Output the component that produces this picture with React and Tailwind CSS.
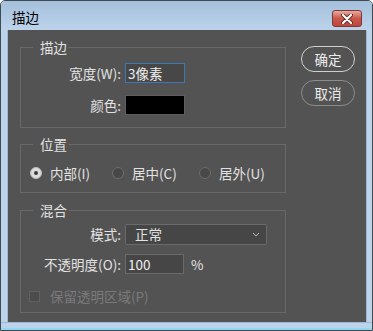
import React from "react";

const font = { fontFamily: '"Noto Sans CJK SC", "Noto Sans", sans-serif' };

const Group = ({ title, children, className }) => (
  <fieldset className={`border border-[#696969] ${className}`}>
    <legend className="ml-[12px] pl-[7px] pr-[2px] h-[18px] leading-[18px] text-[#e2e2e2]">
      {title}
    </legend>
    {children}
  </fieldset>
);

const Radio = ({ checked, label, w }) => (
  <div className={`flex items-center ${w}`}>
    {checked ? (
      <span className="w-[12px] h-[12px] rounded-full bg-[#dcdcdc] border border-[#bdbdbd] flex items-center justify-center">
        <span className="w-[4px] h-[4px] rounded-full bg-[#3a3a3a]" />
      </span>
    ) : (
      <span className="w-[12px] h-[12px] rounded-full bg-[#484848] border border-[#6c6c6c]" />
    )}
    <span className="ml-[8px] text-[#e2e2e2]">{label}</span>
  </div>
);

export default function App() {
  return (
    <div
      className="w-[373px] h-[331px] flex flex-col bg-[#bcd3ea] border border-[#3f4a55] rounded-t-[5px] overflow-hidden text-[13.5px]"
      style={font}
    >
      {/* title bar */}
      <div className="h-[29px] flex items-start justify-between bg-gradient-to-b from-[#a5c0dc] to-[#bcd3ea]">
        <span className="ml-[11px] mt-[8px] leading-[16px] text-black">描边</span>
        <div className="mt-[9px] mr-[10px] w-[30px] h-[17px] rounded-[3px] border border-[#7a3a36] bg-gradient-to-b from-[#e9a99c] via-[#c9584a] to-[#c0463a] flex items-center justify-center">
          <svg width="12" height="10" viewBox="0 0 12 10">
            <path d="M2 1 L10 9 M10 1 L2 9" stroke="#5a2a26" strokeWidth="4" strokeLinecap="round" />
            <path d="M2 1 L10 9 M10 1 L2 9" stroke="#ffffff" strokeWidth="2.2" strokeLinecap="round" />
          </svg>
        </div>
      </div>

      <div className="flex flex-1">
        <div className="w-[7px] border-r border-[#9fb8d2]" />
        {/* content */}
        <div className="w-[358px] h-[292px] bg-[#535353] flex pl-[12px] text-[#e2e2e2]">
          <div className="w-[266px] flex flex-col">
            <Group title="描边" className="mt-[8px] pb-[12px]">
              <div className="flex items-center h-[20px] mt-[7px]">
                <span className="w-[100px] text-right">宽度(W):</span>
                <div className="ml-[4px] w-[60px] h-[20px] bg-[#474747] border border-[#3f77b5] flex items-center px-[2px] text-[#f0f0f0]">
                  3像素
                </div>
              </div>
              <div className="flex items-center h-[20px] mt-[12px]">
                <span className="w-[100px] text-right">颜色:</span>
                <div className="ml-[4px] w-[60px] h-[20px] bg-black border border-[#5e5e5e]" />
              </div>
            </Group>

            <Group title="位置" className="mt-[7px] pb-[10px]">
              <div className="flex items-center h-[18px] mt-[11px] pl-[9px]">
                <Radio checked label="内部(I)" w="w-[82px]" />
                <Radio label="居中(C)" w="w-[87px]" />
                <Radio label="居外(U)" w="w-[80px]" />
              </div>
            </Group>

            <Group title="混合" className="mt-[8px] pb-[8px]">
              <div className="flex items-center h-[20px] mt-[5px]">
                <span className="w-[100px] text-right">模式:</span>
                <div className="ml-[4px] w-[142px] h-[21px] bg-[#464646] border border-[#6a6a6a] rounded-[2px] flex items-center justify-between pl-[9px] pr-[6px]">
                  <span>正常</span>
                  <svg width="8" height="5" viewBox="0 0 8 5">
                    <path d="M1 1 L4 4 L7 1" stroke="#b8b8b8" strokeWidth="1" fill="none" />
                  </svg>
                </div>
              </div>
              <div className="flex items-center h-[20px] mt-[10px]">
                <span className="w-[100px] text-right">不透明度(O):</span>
                <div className="ml-[4px] w-[59px] h-[20px] bg-[#464646] border border-[#6a6a6a] flex items-center px-[2px] text-[#f0f0f0]">
                  100
                </div>
                <span className="ml-[7px]">%</span>
              </div>
              <div className="flex items-center h-[16px] mt-[14px] pl-[8px]">
                <span className="w-[11px] h-[11px] bg-[#4c4c4c] border border-[#616161]" />
                <span className="ml-[10px] text-[#7a7a7a]">保留透明区域(P)</span>
              </div>
            </Group>
          </div>

          <div className="ml-[15px] pt-[16px] flex flex-col gap-[8px]">
            <button className="w-[54px] h-[26px] rounded-full border border-[#cfcfcf] text-[#ececec] flex items-center justify-center">
              确定
            </button>
            <button className="w-[54px] h-[26px] rounded-full border border-[#8c8c8c] text-[#ececec] flex items-center justify-center">
              取消
            </button>
          </div>
        </div>
        <div className="flex-1 border-l border-[#9fb8d2]" />
      </div>
      <div className="h-[8px] border-t border-[#9fb8d2] border-b-2 border-b-[#8fd6ee]" />
    </div>
  );
}
